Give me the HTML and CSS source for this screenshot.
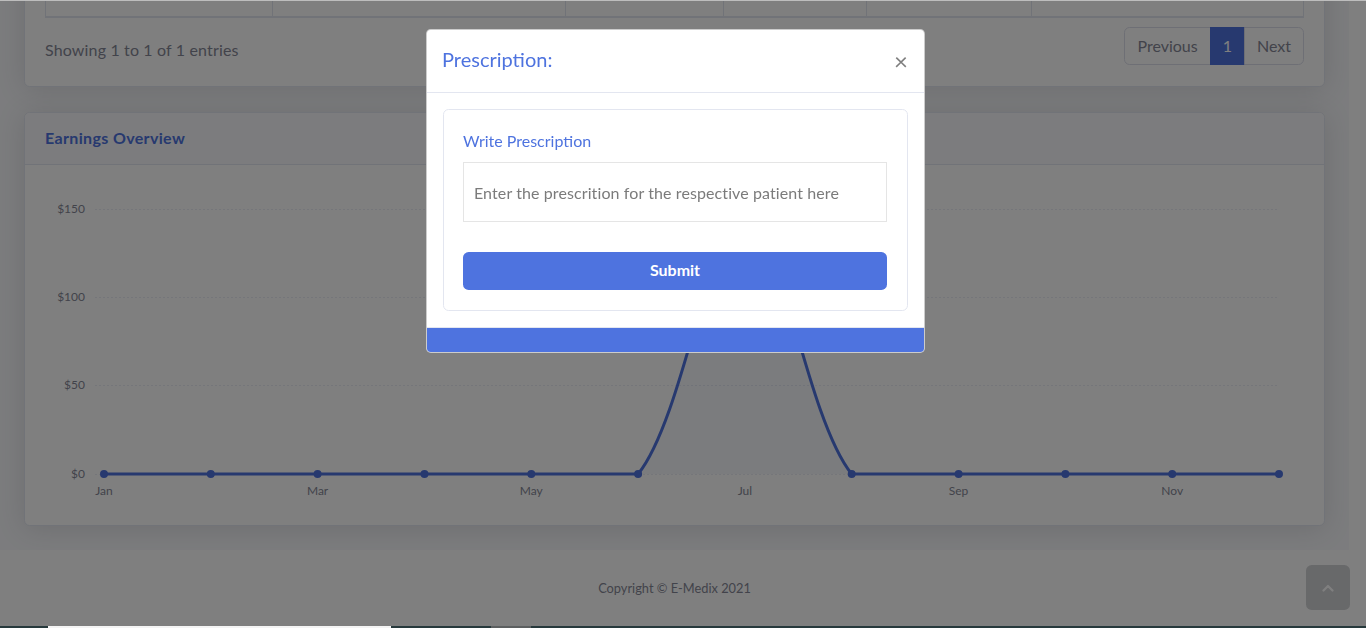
FILE: index.html
```html
<!DOCTYPE html>
<html lang="en">
<head>
<meta charset="utf-8">
<title>E-Medix - Dashboard</title>
<link rel="stylesheet" href="styles.css">
</head>
<body>
<div class="content-wrapper">
  <div class="container">
    <div class="card table-card">
      <div class="card-body">
        <table class="data-table">
          <thead>
            <tr>
              <th class="c1"></th>
              <th class="c2"></th>
              <th class="c3"></th>
              <th class="c4"></th>
              <th class="c5"></th>
              <th class="c6"></th>
            </tr>
          </thead>
          <tbody>
            <tr>
              <td></td><td></td><td></td><td></td><td></td><td></td>
            </tr>
          </tbody>
        </table>
        <div class="dt-footer">
          <div class="dt-info">Showing 1 to 1 of 1 entries</div>
          <ul class="pagination">
            <li class="page-item"><a class="page-link">Previous</a></li>
            <li class="page-item active"><a class="page-link">1</a></li>
            <li class="page-item"><a class="page-link">Next</a></li>
          </ul>
        </div>
      </div>
    </div>

    <div class="card chart-card">
      <div class="card-header">
        <h6 class="card-title">Earnings Overview</h6>
      </div>
      <div class="card-body">
        <div class="chart-area">
          <svg class="chart" width="1259" height="320" viewBox="0 0 1259 320">
            <g class="grid">
              <line x1="50" y1="24.5" x2="1234" y2="24.5"/>
              <line x1="50" y1="112.5" x2="1234" y2="112.5"/>
              <line x1="50" y1="200.5" x2="1234" y2="200.5"/>
              <line x1="50" y1="289.5" x2="1234" y2="289.5"/>
            </g>
            <g class="ylabels">
              <text x="40" y="28">$150</text>
              <text x="40" y="116">$100</text>
              <text x="40" y="204">$50</text>
              <text x="40" y="293">$0</text>
            </g>
            <g class="xlabels">
              <text x="59" y="310">Jan</text>
              <text x="272.6" y="310">Mar</text>
              <text x="486.3" y="310">May</text>
              <text x="699.9" y="310">Jul</text>
              <text x="913.6" y="310">Sep</text>
              <text x="1127.2" y="310">Nov</text>
            </g>
            <path class="area" d="M59 289 L593.1 289 C639.75 231.1 667.86 24 699.9 24 C731.94 24 760.05 231.1 806.7 289 L1234 289 Z"/>
            <path class="line" d="M59 289 L593.1 289 C639.75 231.1 667.86 24 699.9 24 C731.94 24 760.05 231.1 806.7 289 L1234 289"/>
            <g class="points">
              <circle cx="59" cy="289" r="3"/>
              <circle cx="165.8" cy="289" r="3"/>
              <circle cx="272.6" cy="289" r="3"/>
              <circle cx="379.5" cy="289" r="3"/>
              <circle cx="486.3" cy="289" r="3"/>
              <circle cx="593.1" cy="289" r="3"/>
              <circle cx="699.9" cy="24" r="3"/>
              <circle cx="806.7" cy="289" r="3"/>
              <circle cx="913.6" cy="289" r="3"/>
              <circle cx="1020.4" cy="289" r="3"/>
              <circle cx="1127.2" cy="289" r="3"/>
              <circle cx="1234" cy="289" r="3"/>
            </g>
          </svg>
        </div>
      </div>
    </div>
  </div>

  <footer class="sticky-footer">
    <span class="copyright">Copyright &copy; E-Medix 2021</span>
  </footer>
</div>

<a class="scroll-to-top" href="#">
  <svg width="12" height="8" viewBox="0 0 12 8"><path d="M1.5 6.5 L6 2 L10.5 6.5" fill="none" stroke="#fff" stroke-width="2.2" stroke-linecap="round" stroke-linejoin="round"/></svg>
</a>

<div class="backdrop"></div>

<div class="modal">
  <div class="modal-dialog">
    <div class="modal-content">
      <div class="modal-header">
        <h5 class="modal-title">Prescription:</h5>
        <button class="close" type="button">&times;</button>
      </div>
      <div class="modal-body">
        <div class="inner-card">
          <form class="inner-card-body">
            <label class="rx-label">Write Prescription</label>
            <input class="rx-input" type="text" placeholder="Enter the prescrition for the respective patient here">
            <button class="btn-submit" type="button">Submit</button>
          </form>
        </div>
      </div>
      <div class="modal-footer"></div>
    </div>
  </div>
</div>

<div class="top-edge"></div>
<div class="taskbar">
  <span class="tb tb-dark1"></span>
  <span class="tb tb-white"></span>
  <span class="tb tb-dark2"></span>
  <span class="tb tb-grey"></span>
  <span class="tb tb-dark3"></span>
</div>
</body>
</html>
```

FILE: styles.css
```css
* { box-sizing: border-box; }

html, body {
  height: 628px;
}

body {
  margin: 0;
  padding-right: 17px;
  background: #fff;
  font-family: Lato, "Noto Sans", sans-serif;
  font-size: 16px;
  color: #858796;
  overflow: hidden;
}

.content-wrapper {
  background: #f8f9fc;
}

.container {
  padding: 0 24px;
  margin-top: -105px;
  display: flow-root;
}

.card {
  background: #fff;
  border: 1px solid #e3e6f0;
  border-radius: 5.6px;
  box-shadow: 0 2.4px 28px 0 rgba(58, 59, 69, 0.15);
  margin-bottom: 24px;
}

.table-card {
  margin-bottom: 25px;
}

.table-card .card-body {
  padding: 20px 20px 21px;
}

.data-table {
  width: 100%;
  table-layout: fixed;
  border-collapse: separate;
  border-spacing: 0;
  border: 1px solid #e3e6f0;
  color: #858796;
}

.data-table th,
.data-table td {
  height: 49px;
  padding: 0 12px;
  border-right: 1px solid #e3e6f0;
  border-bottom: 1px solid #e3e6f0;
  text-align: left;
  vertical-align: top;
  box-sizing: content-box;
}

.data-table th:last-child,
.data-table td:last-child {
  border-right: 0;
}

.c1 { width: 202px; }
.c2 { width: 268px; }
.c3 { width: 133px; }
.c4 { width: 118px; }
.c5 { width: 140px; }

.dt-footer {
  margin-top: 9px;
  display: flex;
  align-items: flex-start;
  justify-content: space-between;
}

.dt-info {
  padding-top: 13px;
  font-size: 16px;
  line-height: 20px;
  letter-spacing: 0.15px;
  color: #858796;
}

.pagination {
  display: flex;
  list-style: none;
  margin: 0;
  padding: 0;
}

.page-link {
  display: block;
  padding: 8px 12px;
  line-height: 20px;
  border: 1px solid #dddfeb;
  margin-left: -1px;
  color: #858796;
  background: #fff;
}

.page-item:first-child .page-link {
  margin-left: 0;
  border-radius: 5.6px 0 0 5.6px;
}

.page-item:last-child .page-link {
  border-radius: 0 5.6px 5.6px 0;
}

.page-item.active .page-link {
  background: #4e73df;
  border-color: #4e73df;
  color: #fff;
}

.chart-card .card-header {
  padding: 15px 20px 17px;
  background: #f8f9fc;
  border-bottom: 1px solid #e3e6f0;
  border-radius: 5px 5px 0 0;
}

.card-title {
  margin: 0;
  font-size: 16px;
  line-height: 19.2px;
  font-weight: 700;
  letter-spacing: 0.35px;
  color: #4e73df;
}

.chart-card .card-body {
  padding: 20px;
}

.chart-area {
  height: 320px;
}

.chart {
  display: block;
}

.grid line {
  stroke: #eaecf4;
  stroke-width: 1;
  stroke-dasharray: 2 2;
}

.ylabels text {
  font-family: Lato, "Noto Sans", sans-serif;
  font-size: 12px;
  fill: #858796;
  text-anchor: end;
}

.xlabels text {
  font-family: Lato, "Noto Sans", sans-serif;
  font-size: 12px;
  fill: #858796;
  text-anchor: middle;
}

.area {
  fill: rgba(78, 115, 223, 0.05);
}

.line {
  fill: none;
  stroke: #4e73df;
  stroke-width: 3;
}

.points circle {
  fill: #4e73df;
  stroke: #4e73df;
  stroke-width: 2;
}

.sticky-footer {
  background: #fff;
  padding: 32px 0;
  text-align: center;
}

.copyright {
  display: block;
  font-size: 12.8px;
  line-height: 1;
  color: #858796;
}

.scroll-to-top {
  position: fixed;
  right: 16px;
  bottom: 18px;
  width: 44px;
  height: 45px;
  border-radius: 5.6px;
  background: rgba(90, 92, 105, 0.28);
  display: flex;
  align-items: center;
  justify-content: center;
}

.backdrop {
  position: fixed;
  inset: 0;
  background: #000;
  opacity: 0.5;
}

.modal {
  position: fixed;
  inset: 0;
  padding-right: 15px;
}

.modal-dialog {
  width: 499px;
  margin: 29px auto 0;
}

.modal-content {
  background: #fff;
  border: 1px solid rgba(0, 0, 0, 0.2);
  border-radius: 4.8px;
  overflow: hidden;
}

.modal-header {
  display: flex;
  align-items: flex-start;
  padding: 14px 16px 18px 15px;
  border-bottom: 1px solid #e3e6f0;
}

.modal-title {
  margin: 0;
  font-size: 20px;
  line-height: 30px;
  font-weight: 400;
  color: #4e73df;
}

.close {
  margin: -14px -16px -18px auto;
  padding: 16px;
  background: none;
  border: 0;
  font-family: Lato, "Noto Sans", sans-serif;
  font-size: 24px;
  line-height: 30px;
  font-weight: 400;
  color: #000;
  opacity: 0.5;
}

.modal-body {
  padding: 16px;
}

.inner-card {
  border: 1px solid #e3e6f0;
  border-radius: 5.6px;
}

.inner-card-body {
  padding: 19px 20px 20px 19px;
  margin: 0;
  display: flex;
  flex-direction: column;
}

.rx-label {
  display: block;
  color: #4e73df;
  font-size: 16px;
  line-height: 24px;
  margin-bottom: 9px;
}

.rx-input {
  height: 60px;
  border: 1px solid #e5e5e5;
  border-radius: 0;
  padding: 0 10px;
  font-family: Lato, "Noto Sans", sans-serif;
  font-size: 16px;
  letter-spacing: 0.1px;
  color: #6e707e;
  outline: none;
}

.rx-input::placeholder {
  color: #7b7b7b;
}

.btn-submit {
  margin-top: 30px;
  height: 38px;
  padding: 0 0 3px;
  border: 0;
  border-radius: 5.6px;
  background: #4e73df;
  color: #fff;
  font-family: Lato, "Noto Sans", sans-serif;
  font-size: 16px;
  font-weight: 700;
}

.modal-footer {
  height: 25px;
  border-top: 1px solid #e3e6f0;
  background: #4e73df;
}

.top-edge {
  position: fixed;
  top: 0;
  left: 0;
  right: 0;
  height: 1px;
  background: #bdbdbd;
}

.taskbar {
  position: fixed;
  left: 0;
  right: 0;
  bottom: 0;
  height: 2px;
  display: flex;
}

.tb { display: block; height: 2px; }
.tb-dark1 { width: 48px; background: #27393c; }
.tb-white { width: 343px; background: #f4f4f4; }
.tb-dark2 { width: 100px; background: #27393c; }
.tb-grey { width: 40px; background: #5c5f60; }
.tb-dark3 { flex: 1; background: #27393c; }
```
